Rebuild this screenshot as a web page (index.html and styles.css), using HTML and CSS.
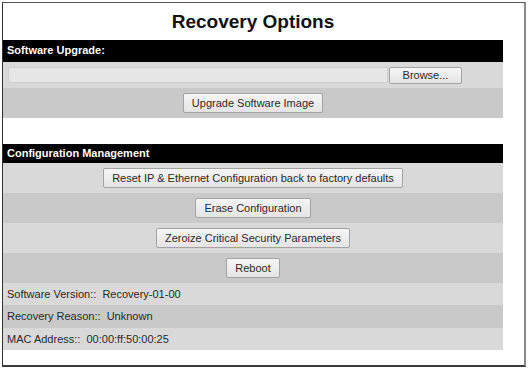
FILE: index.html
```html
<!DOCTYPE html>
<html lang="en">
    <head>
        <meta charset="UTF-8">
        <title>Recovery Options</title>
        <link rel="stylesheet" href="styles.css">
    </head>
    <body>
        <div class="frame">
            <div class="panel">
                <h1>Recovery Options</h1>

                <div class="section-title">Software Upgrade:</div>
                <div class="row light file-row">
                    <input type="text" class="file-path" readonly>
                    <button class="btn">Browse...</button>
                </div>
                <div class="row dark center">
                    <button class="btn">Upgrade Software Image</button>
                </div>

                <div class="section-title gap">Configuration Management</div>
                <div class="row light center">
                    <button class="btn">Reset IP &amp; Ethernet Configuration back to factory defaults</button>
                </div>
                <div class="row dark center">
                    <button class="btn">Erase Configuration</button>
                </div>
                <div class="row light center">
                    <button class="btn">Zeroize Critical Security Parameters</button>
                </div>
                <div class="row dark center">
                    <button class="btn">Reboot</button>
                </div>
                <div class="info light">Software Version::&nbsp; Recovery-01-00</div>
                <div class="info dark">Recovery Reason::&nbsp; Unknown</div>
                <div class="info light">MAC Address::&nbsp; 00:00:ff:50:00:25</div>
            </div>
        </div>
    </body>
</html>
```
FILE: styles.css
```css
body {
    margin: 0;
    padding: 0;
    background-color: #ffffff;
    font-family: 'Liberation Sans', Arial, sans-serif;
    font-size: 11px;
    color: #2a2a2a;
}
.frame {
    margin: 2px 0 0 2px;
    width: 521px;
    height: 362px;
    border-top: 1px solid #555555;
    border-left: 1px solid #333333;
    border-right: 2px solid #8a8a8a;
    border-bottom: 2px solid #3a3a3a;
    background: #ffffff;
}
.panel {
    width: 500px;
}
h1 {
    margin: 0;
    height: 37px;
    line-height: 37px;
    text-align: center;
    font-size: 19px;
    font-weight: bold;
    color: #111111;
}
.section-title {
    background: #000000;
    color: #ffffff;
    font-weight: bold;
    height: 22px;
    line-height: 21px;
    padding-left: 4px;
}
.section-title.gap {
    margin-top: 26px;
    height: 19px;
    line-height: 18px;
}
.row {
    display: flex;
    align-items: center;
    height: 30px;
}
.row.center {
    justify-content: center;
}
.light {
    background: #d9d9d9;
}
.dark {
    background: #c9c9c9;
}
.file-row {
    height: 26px;
    padding-left: 5px;
}
.file-path {
    width: 380px;
    height: 16px;
    box-sizing: border-box;
    margin: 0 1px 0 0;
    border: 1px solid #cfcfcf;
    background: #e6e6e6;
}
.btn {
    font-family: 'Liberation Sans', Arial, sans-serif;
    font-size: 11px;
    color: #2a2a2a;
    height: 20px;
    padding: 0 8px;
    margin: 0;
    border: 1px solid #a3a3a3;
    border-radius: 2px;
    background: linear-gradient(#f6f6f6, #e4e4e4);
}
.file-row .btn {
    width: 73px;
    height: 17px;
    padding: 0;
}
.info {
    height: 22px;
    line-height: 22px;
    padding-left: 4px;
}
.info.dark {
    height: 23px;
}
```
